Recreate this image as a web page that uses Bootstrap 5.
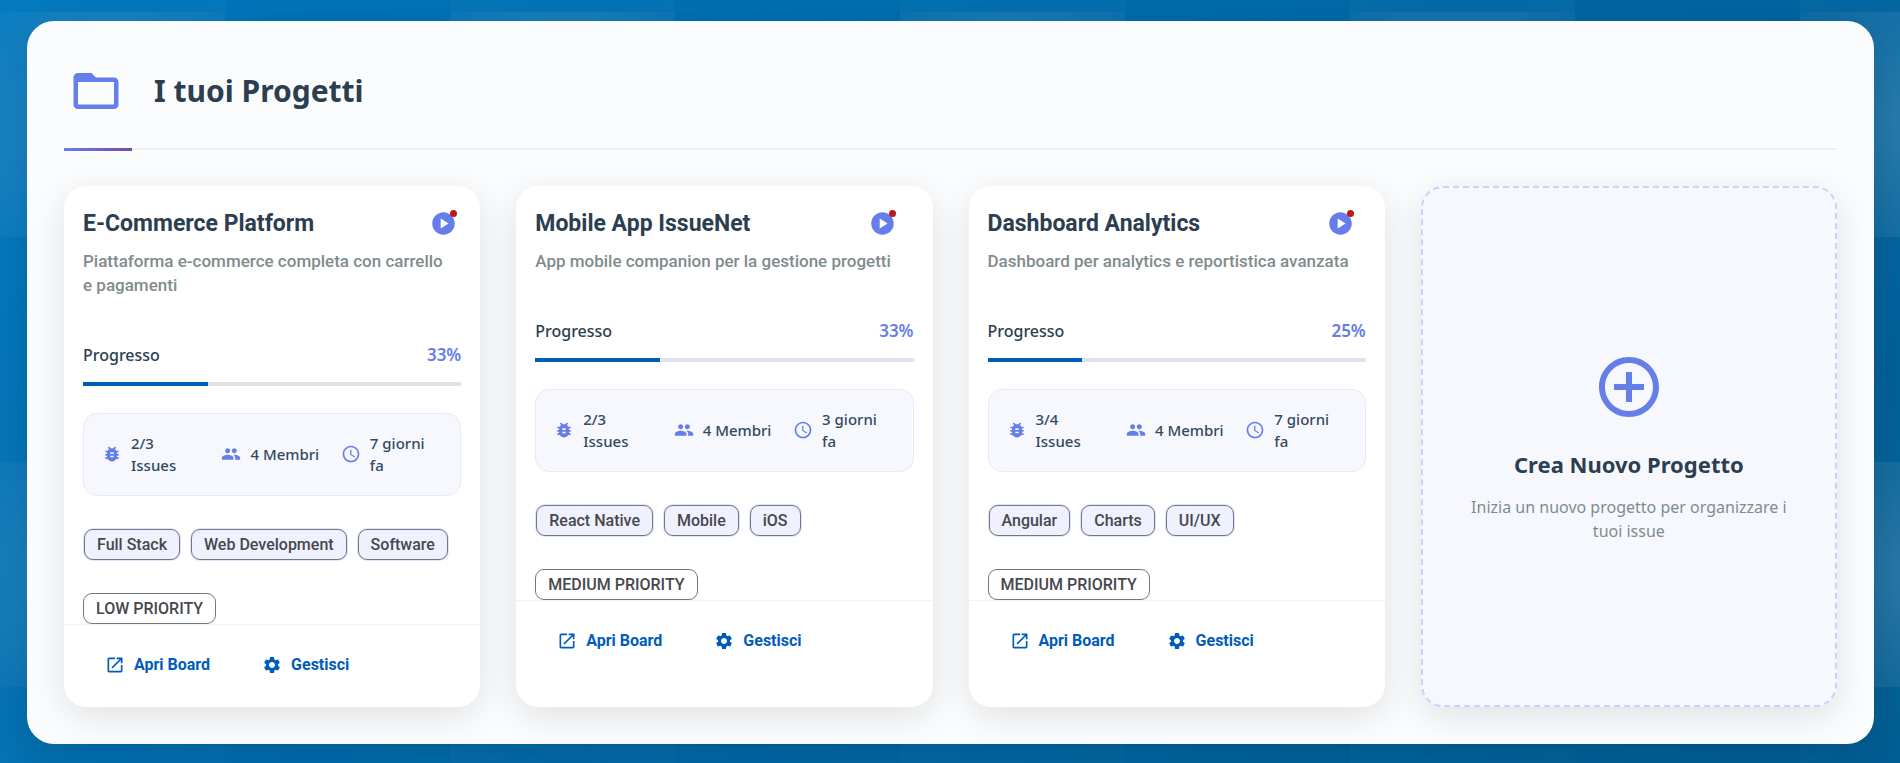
<!DOCTYPE html>
<html lang="it">
<head>
<meta charset="utf-8">
<meta name="viewport" content="width=device-width, initial-scale=1">
<title>I tuoi Progetti</title>
<link href="https://cdn.jsdelivr.net/npm/bootstrap@5.3.0/dist/css/bootstrap.min.css" rel="stylesheet">
<style>
:root { --ink: #2c3e50; --accent: #667eea; --muted: #7f8c8d; --action: #005cbb; }
body {
  min-height: 100vh;
  font-family: "Noto Sans", sans-serif;
  color: var(--ink);
  background:
    url("data:image/svg+xml,%3Csvg xmlns='http://www.w3.org/2000/svg' width='450' height='450'%3E%3Cdefs%3E%3CradialGradient id='a' r='.7'%3E%3Cstop stop-color='white' stop-opacity='.16'/%3E%3Cstop offset='1' stop-color='white' stop-opacity='.05'/%3E%3C/radialGradient%3E%3CradialGradient id='b' r='.7'%3E%3Cstop stop-color='white' stop-opacity='0'/%3E%3Cstop offset='1' stop-color='white' stop-opacity='.025'/%3E%3C/radialGradient%3E%3C/defs%3E%3Crect width='225' height='225' fill='url(%23a)'/%3E%3Crect y='225' width='225' height='225' fill='url(%23b)'/%3E%3C/svg%3E") 0 12px,
    linear-gradient(135deg, #0077be, #005c93);
}
.page-wrap { padding: 21px 26px 19px 27px; }
.panel { background: #fbfcfe; border-radius: 27px; padding: 36px 37px 37px; box-shadow: 0 9px 36px rgba(0,0,0,.14); }
.panel-head { position: relative; gap: 26px; padding-bottom: 23px; margin-bottom: 36px; border-bottom: 2px solid #eeeff1; }
.panel-head::after { content: ""; position: absolute; left: 0; bottom: -3px; width: 68px; height: 3px; background: linear-gradient(90deg, #667eea, #764ba2); }
.head-icon { width: 64px; height: 68px; color: var(--accent); }
.panel-title { font-size: 30px; line-height: 44px; font-weight: 700; }
.ico { fill: currentColor; width: 20px; height: 20px; flex: none; }
.ico-54 { width: 54px; height: 54px; }
.ico-72 { width: 72px; height: 72px; color: var(--accent); }
.ico-27 { width: 27px; height: 27px; }
.project-grid { --bs-gutter-x: 36px; --bs-gutter-y: 36px; }
.project { border: 0; border-radius: 22px; background: #fff; box-shadow: 0 9px 36px rgba(0,0,0,.11); }
.project-body { padding: 20px 19px 0; }
.project-head { width: fit-content; max-width: 100%; margin-bottom: 46px; font-family: Roboto, sans-serif; }
.project-name { font-size: 23px; line-height: 36px; height: 34px; font-weight: 700; color: var(--ink); }
.state { position: relative; width: 35px; height: 34px; color: var(--accent); }
.state-dot { position: absolute; top: 4px; right: 4px; width: 7px; height: 7px; border-radius: 50%; background: #ba1a1a; }
.project-text { margin-top: 9px; padding-right: 9px; font-size: 17px; line-height: 24px; font-weight: 500; color: var(--muted); }
.progress-label { font-size: 16px; line-height: 24px; font-weight: 500; margin-bottom: 15px; }
.progress-value { color: var(--accent); font-size: 17px; font-weight: 600; }
.bar-track { height: 4px; border-radius: 0; background: #dfe2eb; margin-bottom: 27px; }
.bar-track .progress-bar { background: var(--action); }
.stats { display: grid; grid-template-columns: repeat(3, minmax(0, 1fr)); gap: 18px; padding: 18px 18px 19px; border: 1px solid #e6e9fc; border-radius: 14px; background: #f7f8fe; font-size: 15px; line-height: 22px; font-weight: 500; color: #34495e; margin-bottom: 33px; }
.stat { gap: 9px; padding-right: 4px; }
.stat .ico { color: var(--accent); }
.chip-row { gap: 11px; padding: 0 1px; margin-bottom: 33px; }
.chip { height: 31px; padding: 0 12px; display: inline-flex; align-items: center; border: 1px solid #74777f; border-radius: 9px; font: 500 16px/29px Roboto, sans-serif; color: #47484d; }
.chip-row .chip { background: #eff1fe; box-shadow: 0 0 0 1px #dfe4fc; }
.actions { border-top: 1px solid #f3f3f5; gap: 20px; padding: 20px 25px 22px; }
.act { gap: 9px; padding: 8px 16px; border: 0; font: 700 16px/24px Roboto, sans-serif; color: var(--action); }
.new-project { border: 2px dashed #c9d2fa; background: #f7f8fe; padding: 36px; color: var(--ink); }
.new-title { margin-top: 26px; font-size: 22px; line-height: 30px; font-weight: 700; }
.new-text { margin-top: 16px; padding: 0 12px; font-size: 16px; line-height: 24px; color: var(--muted); }
</style>
</head>
<body>
<svg class="d-none" aria-hidden="true">
  <symbol id="i-folder" viewBox="0 0 24 24"><path d="M20 6h-8l-2-2H4c-1.1 0-1.990.9-1.990 2L2 18c0 1.100.9 2 2 2h16c1.100 0 2-.9 2-2V8c0-1.100-.9-2-2-2zm0 12H4V8h16v10z"/><path d="M4 5h6l2 2v1H4z"/></symbol>
  <symbol id="i-play" viewBox="0 0 24 24"><path d="M12 2C6.480 2 2 6.480 2 12s4.480 10 10 10 10-4.480 10-10S17.520 2 12 2zm-2.500 14.500v-9l7 4.500-7 4.500z"/></symbol>
  <symbol id="i-bug" viewBox="0 0 24 24"><path d="M20 8h-2.810c-.45-.78-1.070-1.450-1.820-1.960L17 4.410 15.590 3l-2.170 2.170C12.960 5.060 12.490 5 12 5s-.96.06-1.410.17L8.410 3 7 4.410l1.620 1.630C7.880 6.550 7.260 7.220 6.810 8H4v2h2.090c-.05.33-.09.66-.09 1v1H4v2h2v1c0 .34.04.67.09 1H4v2h2.810c1.040 1.790 2.970 3 5.190 3s4.150-1.210 5.190-3H20v-2h-2.090c.05-.33.09-.66.09-1v-1h2v-2h-2v-1c0-.34-.04-.67-.09-1H20V8zm-6 8h-4v-2h4v2zm0-4h-4v-2h4v2z"/></symbol>
  <symbol id="i-people" viewBox="0 0 24 24"><path d="M16 11c1.660 0 2.990-1.340 2.990-3S17.660 5 16 5s-3 1.340-3 3 1.340 3 3 3zm-8 0c1.660 0 2.990-1.340 2.990-3S9.660 5 8 5 5 6.340 5 8s1.340 3 3 3zm0 2c-2.330 0-7 1.170-7 3.500V19h14v-2.500C15 14.170 10.330 13 8 13zm8 0c-.29 0-.62.02-.97.05 1.160.84 1.970 1.970 1.970 3.450V19h6v-2.500c0-2.330-4.670-3.500-7-3.500z"/></symbol>
  <symbol id="i-clock" viewBox="0 0 24 24"><path d="M11.990 2C6.470 2 2 6.480 2 12s4.470 10 9.990 10C17.520 22 22 17.520 22 12S17.520 2 11.990 2zM12 20c-4.420 0-8-3.580-8-8s3.580-8 8-8 8 3.580 8 8-3.580 8-8 8zM12.500 7H11v6l5.250 3.150.75-1.230-4.500-2.670z"/></symbol>
  <symbol id="i-open" viewBox="0 0 24 24"><path d="M19 19H5V5h7V3H5c-1.110 0-2 .9-2 2v14c0 1.100.89 2 2 2h14c1.100 0 2-.9 2-2v-7h-2v7zM14 3v2h3.590l-9.830 9.830 1.410 1.410L19 6.410V10h2V3h-7z"/></symbol>
  <symbol id="i-gear" viewBox="0 0 24 24"><path d="M19.140 12.940c.04-.3.06-.61.06-.94 0-.32-.02-.64-.07-.94l2.030-1.580c.18-.14.23-.41.12-.61l-1.920-3.320c-.12-.22-.37-.29-.59-.22l-2.390.96c-.5-.38-1.030-.7-1.620-.94l-.36-2.540c-.04-.24-.24-.41-.48-.41h-3.840c-.24 0-.43.17-.47.41l-.36 2.540c-.59.24-1.130.57-1.620.94l-2.390-.96c-.22-.08-.47 0-.59.22L2.740 8.870c-.12.21-.08.47.12.61l2.030 1.580c-.05.3-.09.63-.09.94s.02.64.07.94l-2.030 1.580c-.18.14-.23.41-.12.61l1.920 3.320c.12.22.37.29.59.22l2.390-.96c.5.38 1.030.7 1.620.94l.36 2.540c.05.24.24.41.48.41h3.840c.24 0 .44-.17.47-.41l.36-2.540c.59-.24 1.130-.56 1.620-.94l2.390.96c.22.08.47 0 .59-.22l1.920-3.320c.12-.22.07-.47-.12-.61l-2.010-1.580zM12 15.600c-1.980 0-3.600-1.620-3.600-3.600s1.620-3.600 3.600-3.600 3.600 1.620 3.600 3.600-1.620 3.600-3.600 3.600z"/></symbol>
  <symbol id="i-plus" viewBox="0 0 24 24"><path d="M13 7h-2v4H7v2h4v4h2v-4h4v-2h-4V7zm-1-5C6.480 2 2 6.480 2 12s4.480 10 10 10 10-4.480 10-10S17.520 2 12 2zm0 18c-4.410 0-8-3.590-8-8s3.590-8 8-8 8 3.590 8 8-3.590 8-8 8z"/></symbol>
</svg>

<div class="page-wrap">
  <main class="panel">
    <header class="panel-head d-flex align-items-center">
      <span class="head-icon d-flex align-items-center justify-content-center"><svg class="ico ico-54"><use href="#i-folder"/></svg></span>
      <h1 class="panel-title mb-0">I tuoi Progetti</h1>
    </header>

    <div class="row row-cols-1 row-cols-md-2 row-cols-xl-4 project-grid">
      <div class="col">
        <article class="card project h-100">
          <div class="project-body">
            <div class="project-head">
              <div class="d-flex justify-content-between">
                <h2 class="project-name mb-0">E-Commerce Platform</h2>
                <span class="state d-flex align-items-center justify-content-center"><svg class="ico ico-27"><use href="#i-play"/></svg><span class="state-dot"></span></span>
              </div>
              <p class="project-text mb-0">Piattaforma e-commerce completa con carrello e pagamenti</p>
            </div>
            <div class="progress-label d-flex justify-content-between"><span>Progresso</span><span class="progress-value">33%</span></div>
            <div class="progress bar-track" role="progressbar" aria-label="Progresso" aria-valuenow="33" aria-valuemin="0" aria-valuemax="100"><div class="progress-bar" style="width:33%"></div></div>
            <div class="stats">
              <div class="stat d-flex align-items-center"><svg class="ico"><use href="#i-bug"/></svg><span>2/3 Issues</span></div>
              <div class="stat d-flex align-items-center"><svg class="ico"><use href="#i-people"/></svg><span class="text-nowrap">4 Membri</span></div>
              <div class="stat d-flex align-items-center"><svg class="ico"><use href="#i-clock"/></svg><span>7 giorni fa</span></div>
            </div>
            <div class="chip-row d-flex flex-wrap"><span class="chip">Full Stack</span><span class="chip">Web Development</span><span class="chip">Software</span></div>
            <div class="d-flex"><span class="chip">LOW PRIORITY</span></div>
          </div>
          <div class="actions d-flex">
            <button type="button" class="btn act d-inline-flex align-items-center"><svg class="ico"><use href="#i-open"/></svg>Apri Board</button>
            <button type="button" class="btn act d-inline-flex align-items-center"><svg class="ico"><use href="#i-gear"/></svg>Gestisci</button>
          </div>
        </article>
      </div>

      <div class="col">
        <article class="card project h-100">
          <div class="project-body">
            <div class="project-head">
              <div class="d-flex justify-content-between">
                <h2 class="project-name mb-0">Mobile App IssueNet</h2>
                <span class="state d-flex align-items-center justify-content-center"><svg class="ico ico-27"><use href="#i-play"/></svg><span class="state-dot"></span></span>
              </div>
              <p class="project-text mb-0">App mobile companion per la gestione progetti</p>
            </div>
            <div class="progress-label d-flex justify-content-between"><span>Progresso</span><span class="progress-value">33%</span></div>
            <div class="progress bar-track" role="progressbar" aria-label="Progresso" aria-valuenow="33" aria-valuemin="0" aria-valuemax="100"><div class="progress-bar" style="width:33%"></div></div>
            <div class="stats">
              <div class="stat d-flex align-items-center"><svg class="ico"><use href="#i-bug"/></svg><span>2/3 Issues</span></div>
              <div class="stat d-flex align-items-center"><svg class="ico"><use href="#i-people"/></svg><span class="text-nowrap">4 Membri</span></div>
              <div class="stat d-flex align-items-center"><svg class="ico"><use href="#i-clock"/></svg><span>3 giorni fa</span></div>
            </div>
            <div class="chip-row d-flex flex-wrap"><span class="chip">React Native</span><span class="chip">Mobile</span><span class="chip">iOS</span></div>
            <div class="d-flex"><span class="chip">MEDIUM PRIORITY</span></div>
          </div>
          <div class="actions d-flex">
            <button type="button" class="btn act d-inline-flex align-items-center"><svg class="ico"><use href="#i-open"/></svg>Apri Board</button>
            <button type="button" class="btn act d-inline-flex align-items-center"><svg class="ico"><use href="#i-gear"/></svg>Gestisci</button>
          </div>
        </article>
      </div>

      <div class="col">
        <article class="card project h-100">
          <div class="project-body">
            <div class="project-head">
              <div class="d-flex justify-content-between">
                <h2 class="project-name mb-0">Dashboard Analytics</h2>
                <span class="state d-flex align-items-center justify-content-center"><svg class="ico ico-27"><use href="#i-play"/></svg><span class="state-dot"></span></span>
              </div>
              <p class="project-text mb-0">Dashboard per analytics e reportistica avanzata</p>
            </div>
            <div class="progress-label d-flex justify-content-between"><span>Progresso</span><span class="progress-value">25%</span></div>
            <div class="progress bar-track" role="progressbar" aria-label="Progresso" aria-valuenow="25" aria-valuemin="0" aria-valuemax="100"><div class="progress-bar" style="width:25%"></div></div>
            <div class="stats">
              <div class="stat d-flex align-items-center"><svg class="ico"><use href="#i-bug"/></svg><span>3/4 Issues</span></div>
              <div class="stat d-flex align-items-center"><svg class="ico"><use href="#i-people"/></svg><span class="text-nowrap">4 Membri</span></div>
              <div class="stat d-flex align-items-center"><svg class="ico"><use href="#i-clock"/></svg><span>7 giorni fa</span></div>
            </div>
            <div class="chip-row d-flex flex-wrap"><span class="chip">Angular</span><span class="chip">Charts</span><span class="chip">UI/UX</span></div>
            <div class="d-flex"><span class="chip">MEDIUM PRIORITY</span></div>
          </div>
          <div class="actions d-flex">
            <button type="button" class="btn act d-inline-flex align-items-center"><svg class="ico"><use href="#i-open"/></svg>Apri Board</button>
            <button type="button" class="btn act d-inline-flex align-items-center"><svg class="ico"><use href="#i-gear"/></svg>Gestisci</button>
          </div>
        </article>
      </div>

      <div class="col">
        <button type="button" class="project new-project w-100 h-100 d-flex flex-column align-items-center justify-content-center text-center">
          <svg class="ico ico-72"><use href="#i-plus"/></svg>
          <span class="new-title">Crea Nuovo Progetto</span>
          <span class="new-text">Inizia un nuovo progetto per organizzare i tuoi issue</span>
        </button>
      </div>
    </div>
  </main>
</div>
<script src="https://cdn.jsdelivr.net/npm/bootstrap@5.3.0/dist/js/bootstrap.bundle.min.js"></script>
</body>
</html>
